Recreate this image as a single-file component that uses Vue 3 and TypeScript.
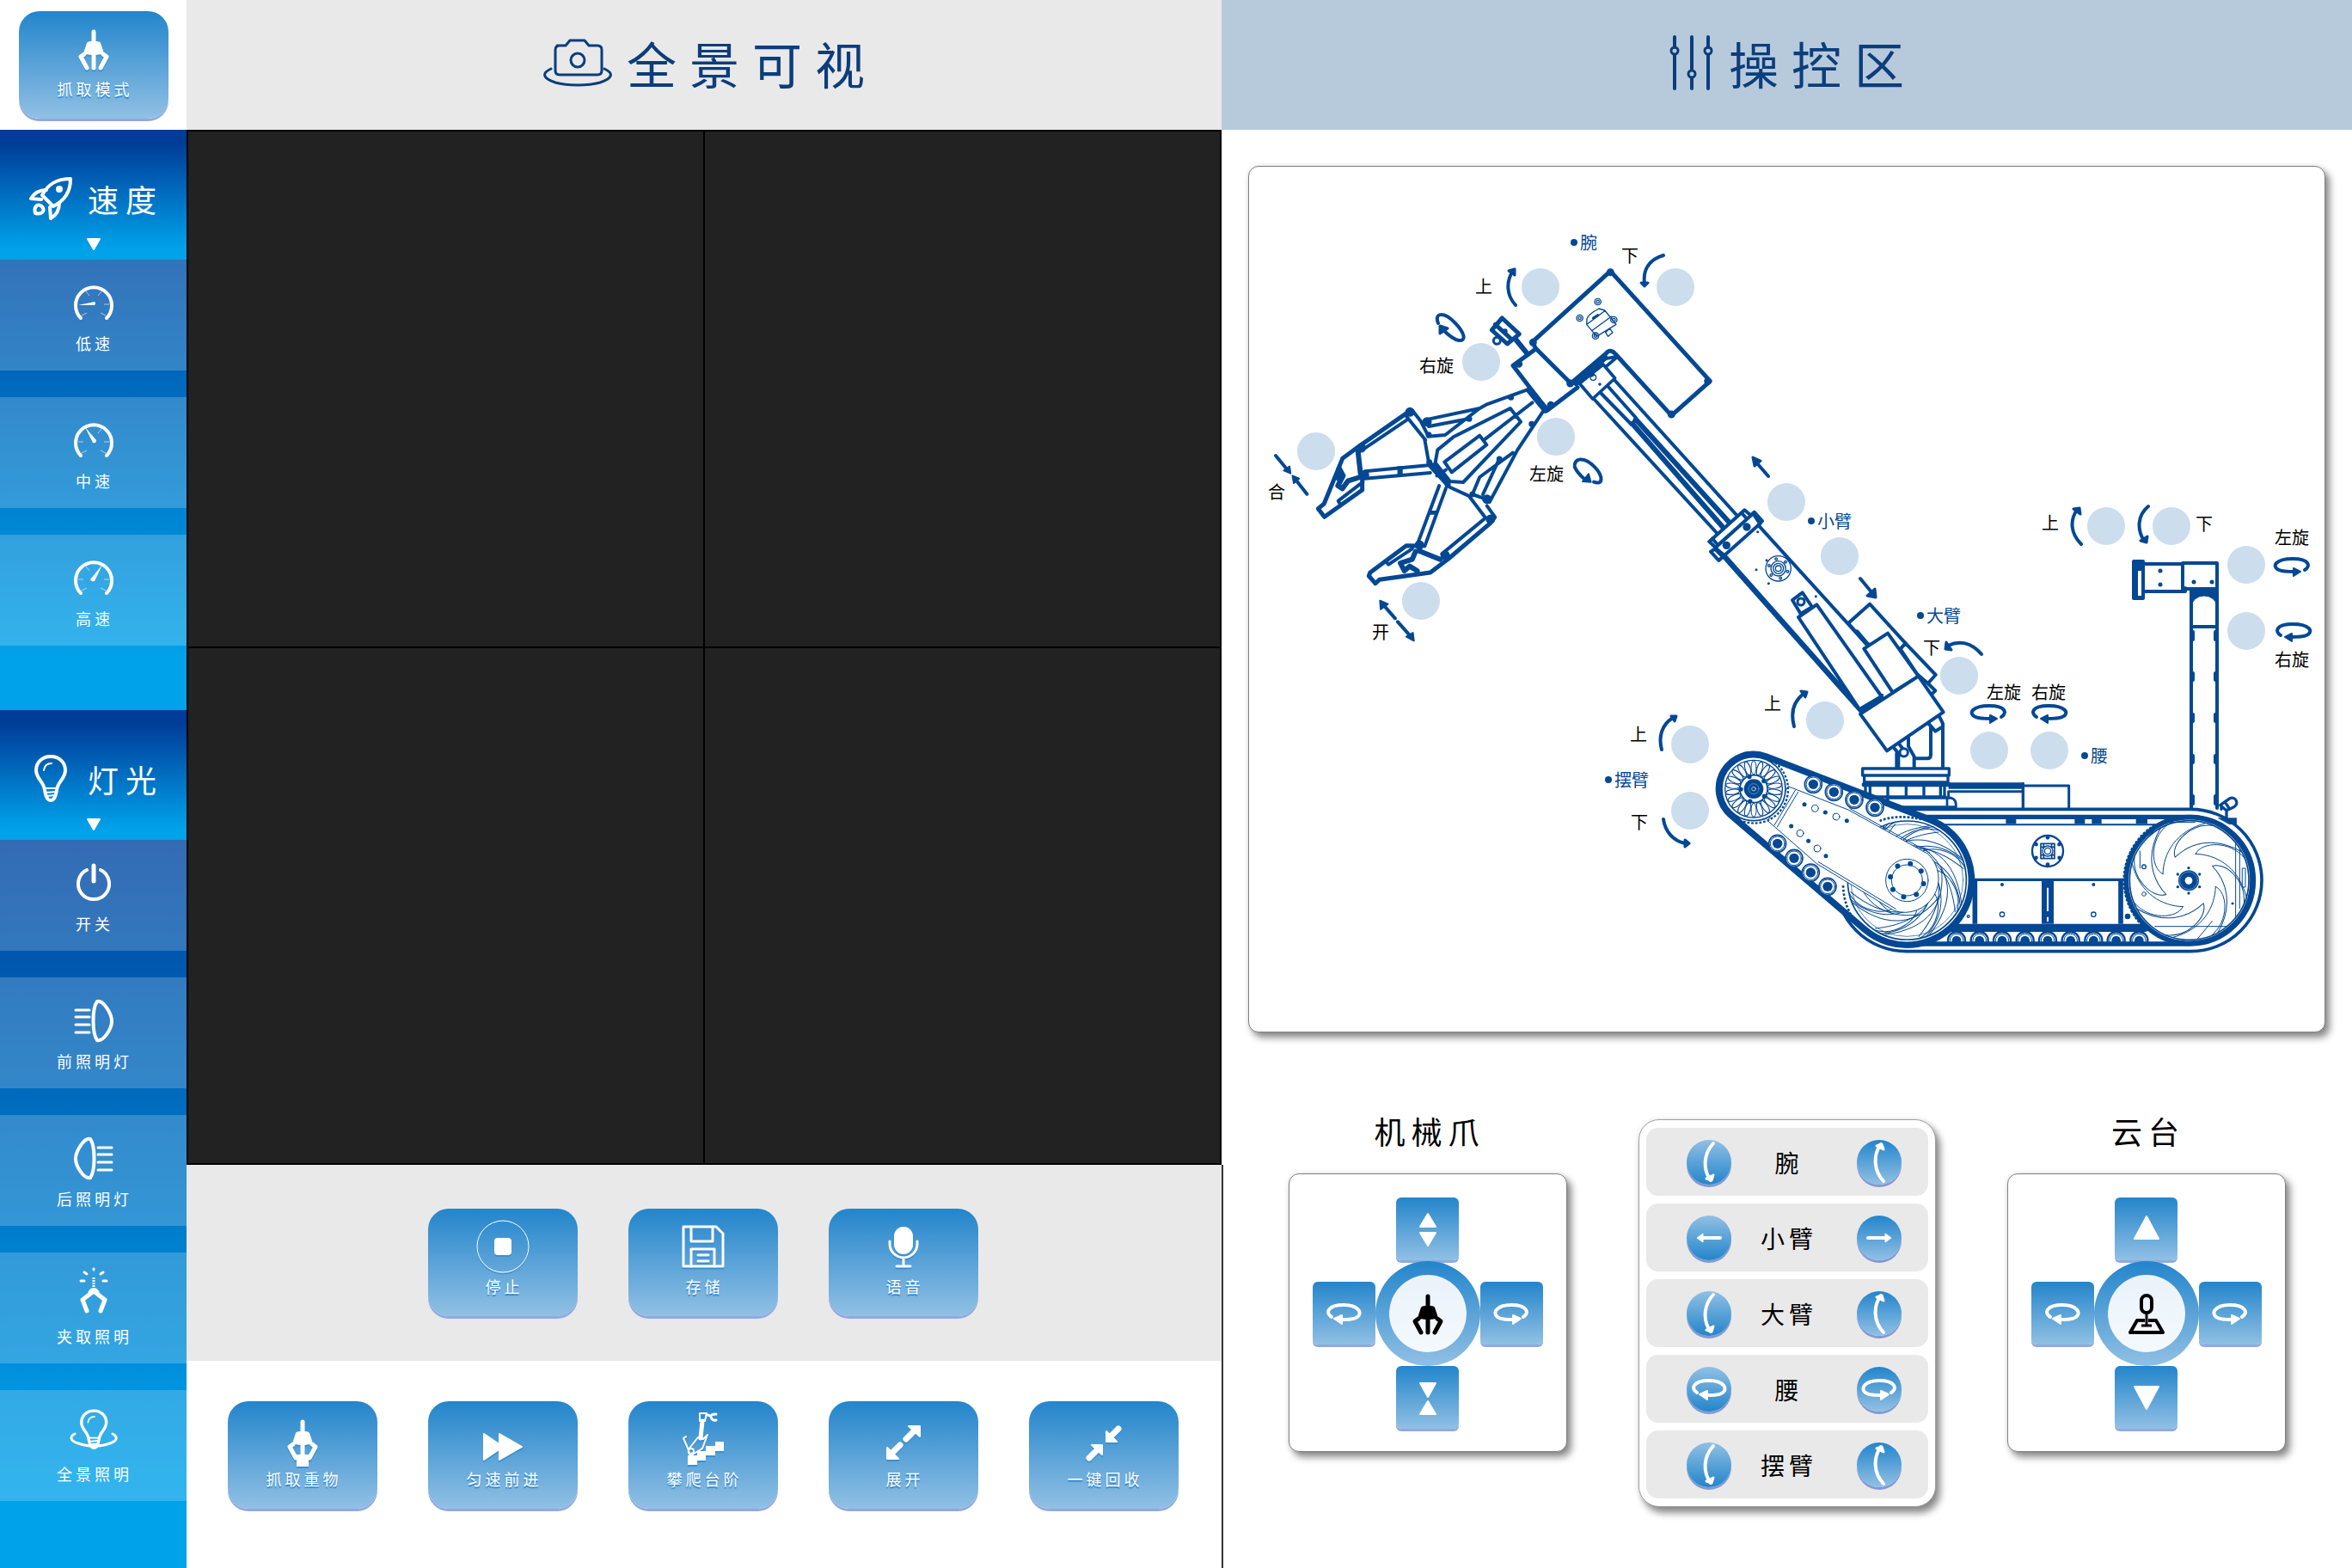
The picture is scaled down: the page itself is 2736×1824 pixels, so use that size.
<script setup lang="ts">
type Shape = { name: string; label: string }

const claw =
  '<path d="M21 38l-4 3 7 13M43 38l4 3-7 13" fill="none" stroke="currentColor" stroke-width="5" stroke-linecap="round" stroke-linejoin="round"/><path d="M32 12V26M32 38V54" stroke="currentColor" stroke-width="5" stroke-linecap="round"/><path d="M24 25q1-2 5-2h6q4 0 5 2l3 9q1 3-2 4-9 2-18 0-3-1-2-4z" fill="currentColor"/>'
const bulb =
  '<g fill="none" stroke="currentColor" stroke-linecap="round" stroke-linejoin="round"><path d="M32 6c-10 0-17 7-17 16 0 10 9 13 10 23 1 7 3 12 7 12s6-5 7-12c1-10 10-13 10-23 0-9-7-16-17-16z" stroke-width="4"/><path d="M24 22q1-8 9-8" stroke-width="2"/><path d="M25 43h14M26 48l12-1M27 52l10-1" stroke-width="2"/></g>'
const gauge = (needle: string, ticks: string) =>
  `<path d="M17 50a21 21 0 1 1 30 0" fill="none" stroke="currentColor" stroke-width="4" stroke-linecap="round"/><path d="${ticks}" stroke="currentColor" stroke-width="1" opacity=".6"/><path d="${needle}" fill="currentColor"/>`
const lamp =
  '<path d="M36 10c-6 8-6 37 0 45 7 2 17-13 17-22S43 8 36 10z" fill="none" stroke="currentColor" stroke-width="4"/><path d="M11 20h16M11 28h16M11 37h16M11 46h16" stroke="currentColor" stroke-width="3" stroke-linecap="round"/>'
const loop =
  '<path d="M46 36c8-5 4-14-14-14s-22 10-16 14c4 3 10 3 18 3" fill="none" stroke="currentColor" stroke-width="4" stroke-linecap="round"/><path d="M34 34v10l9-6z" fill="currentColor" stroke="currentColor" stroke-width="2" stroke-linejoin="round"/>'
const arcDown =
  '<g fill="none" stroke="currentColor" stroke-linecap="round" stroke-linejoin="round"><path d="M37 10c-12 13-12 31-3 43" stroke-width="4"/><path d="M29 51l6 2 2-6z" fill="currentColor" stroke-width="3"/></g>'
const arrowRight =
  '<path d="M19 32h22" stroke="currentColor" stroke-width="4" stroke-linecap="round"/><path d="M39 27l7 5-7 5z" fill="currentColor" stroke="currentColor" stroke-width="1" stroke-linejoin="round"/>'
const flip = (inner: string, sx: number, sy: number) =>
  `<g transform="translate(${sx < 0 ? 64 : 0} ${sy < 0 ? 64 : 0}) scale(${sx} ${sy})">${inner}</g>`
const tri = (d: string) =>
  `<path d="${d}" fill="currentColor" stroke="currentColor" stroke-width="2" stroke-linejoin="round"/>`

const icons: Record<string, string> = {
  claw,
  weight: claw + '<path d="M25 50h14v14h-14z" fill="currentColor"/>',
  bulb,
  rocket:
    '<g transform="translate(7 7)" fill="none" stroke="currentColor" stroke-width="4" stroke-linejoin="round" stroke-linecap="round"><path d="M48 2c-16 0-26 6-33 19l13 13C41 27 48 18 48 2z"/><circle cx="35" cy="14" r="2"/><path d="M20 15C11 15 6 18 2 25l12 1M35 30c0 9-3 14-10 18l-1-13"/><path d="M9 33c-3 2-3 5-2 9 4 1 7 1 9-2 2-4-3-9-7-7z" stroke-width="4"/></g>',
  low: gauge('M14 35l19-4q2 2 0 4z', 'M23 19l4 5M41 19l-4 5M50 34h-6M18 47l6-3M46 47l-6-3'),
  mid: gauge('M22 17l13 15q0 4-4 3z', 'M41 19l-4 5M50 34h-6M14 34h6M18 47l6-3M46 47l-6-3'),
  high: gauge('M42 17l-9 19q-4 1-5-2z', 'M23 19l4 5M50 34h-6M14 34h6M18 47l6-3M46 47l-6-3'),
  power:
    '<g fill="none" stroke="currentColor" stroke-linecap="round"><path d="M24 17a18 18 0 1 0 16 0" stroke-width="4"/><path d="M32 12v18" stroke-width="5"/></g>',
  front: lamp,
  rear: flip(lamp, -1, 1),
  grip:
    '<g fill="none" stroke="currentColor" stroke-linecap="round" stroke-linejoin="round"><path d="M32 27l-13 10 5 13M32 27l13 10-5 13" stroke-width="5"/><path d="M28 28q4-5 8 0" stroke-width="5"/><path d="M32 11v12" stroke-width="3" stroke-linecap="butt" stroke-dasharray="2 1"/><path d="M17 15h4M43 15h4M21 5l3 2M43 5l-3 2M32 1v1" stroke-width="3"/></g>',
  pano:
    '<g transform="translate(5 1) scale(.85)">' + bulb +
    '</g><path d="M10 33c-6 3-6 8 4 11 10 4 27 4 37 0 9-3 9-8 3-11" fill="none" stroke="currentColor" stroke-width="3" stroke-linecap="round"/>',
  stop:
    '<circle cx="32" cy="32" r="30" fill="none" stroke="currentColor" stroke-width="1"/><rect x="22" y="22" width="20" height="20" rx="4" fill="currentColor"/>',
  save:
    '<g fill="none" stroke="currentColor" stroke-width="3" stroke-linejoin="round" stroke-linecap="round"><path d="M9 9h38l8 8v38H9z"/><path d="M18 9v17h25V9M18 55V35h27v20"/><path d="M26 42h12M26 49h12"/></g>',
  mic:
    '<rect x="21" y="9" width="22" height="32" rx="11" fill="currentColor"/><path d="M16 26v3a16 16 0 0 0 32 0v-3M32 45v9M24 55h16" fill="none" stroke="currentColor" stroke-width="3" stroke-linecap="round"/>',
  forward: tri('M10 26l22 15-22 15zM28 26l26 15-26 15z'),
  stairs:
    '<path d="M14 62V51h11v-5h10v-6h11v-5h10v11H46v5H35v6H25v5z" fill="currentColor"/><g fill="none" stroke="currentColor" stroke-width="3" stroke-linejoin="round" stroke-linecap="round"><path d="M28 2h8l-2 9h-6z" stroke-width="2"/><path d="M31 11l-2 20" stroke-width="5"/><path d="M37 4l4 1M47 3q-7 0-6 3 1 5 6 4"/><path d="M26 30l6 2 5-5-6 16-13 8q-4-2-3-7zM15 45l-6-14 3-2" stroke-width="2"/><circle cx="18" cy="46" r="3" stroke-width="2"/></g>',
  expand:
    '<path d="M35 32l11-11M28 39L17 50" stroke="currentColor" stroke-width="7" stroke-linecap="round"/>' + tri('M38 17h13v12zM13 42v13h13z'),
  collapse:
    '<path d="M49 20L39 30M15 54l10-10" stroke="currentColor" stroke-width="7" stroke-linecap="round"/>' + tri('M35 23v12h12zM30 50V39H18z'),
  loopRight: loop,
  loopLeft: flip(loop, -1, 1),
  arcDown,
  arcUp: flip(arcDown, 1, -1),
  arrowRight,
  arrowLeft: flip(arrowRight, -1, 1),
  open: tri('M32 14l9 15h-18zM32 51l9-15h-18z'),
  close: tri('M32 31l9-16h-18zM32 36l9 15h-18z'),
  up: tri('M32 17l14 26h-28z'),
  down: tri('M32 45l14-26h-28z'),
  stick:
    '<g fill="none" stroke="currentColor" stroke-width="4" stroke-linejoin="round"><rect x="26" y="11" width="12" height="20" rx="6"/><path d="M32 31v15M26 46h12" stroke-width="3"/><path d="M30 40h-9l-8 14h38l-8-14h-9"/></g>',
}

const groups = [
  { name: '速度', icon: 'rocket', cls: 'speed', items: [
    { name: 'low', label: '低速' }, { name: 'mid', label: '中速' }, { name: 'high', label: '高速' }] },
  { name: '灯光', icon: 'bulb', cls: 'light', items: [
    { name: 'power', label: '开关' }, { name: 'front', label: '前照明灯' }, { name: 'rear', label: '后照明灯' },
    { name: 'grip', label: '夹取照明' }, { name: 'pano', label: '全景照明' }] },
]

const recordButtons: Shape[] = [
  { name: 'stop', label: '停止' }, { name: 'save', label: '存储' }, { name: 'mic', label: '语音' },
]
const actionButtons: Shape[] = [
  { name: 'weight', label: '抓取重物' }, { name: 'forward', label: '匀速前进' }, { name: 'stairs', label: '攀爬台阶' },
  { name: 'expand', label: '展开' }, { name: 'collapse', label: '一键回收' },
]

const pads = [
  { title: '机械爪', centre: 'claw', up: 'open', down: 'close' },
  { title: '云台', centre: 'stick', up: 'up', down: 'down' },
]
const joints = [
  { label: '腕', left: 'arcDown', right: 'arcUp' },
  { label: '小臂', left: 'arrowLeft', right: 'arrowRight' },
  { label: '大臂', left: 'arcDown', right: 'arcUp' },
  { label: '腰', left: 'loopLeft', right: 'loopRight' },
  { label: '摆臂', left: 'arcDown', right: 'arcUp' },
]

// Diagram coordinates share the drawing's view box.
const view = { x: 1453, y: 194, w: 1251, h: 1006 }
const place = (x: number, y: number) => ({
  left: `${((x - view.x) / view.w) * 100}%`,
  top: `${((y - view.y) / view.h) * 100}%`,
})
const knobs: [number, number, string][] = [
  [1792, 334, '腕上'], [1949, 334, '腕下'], [1723, 421, '腕右旋'], [1810, 508, '腕左旋'], [1531, 525, '合'], [1653, 699, '开'],
  [2078, 584, '小臂伸'], [2140, 647, '小臂缩'], [2279, 786, '大臂下'], [2123, 838, '大臂上'], [2314, 873, '腰左旋'], [2384, 873, '腰右旋'],
  [1966, 866, '摆臂上'], [1966, 943, '摆臂下'], [2450, 612, '云台上'], [2526, 612, '云台下'], [2613, 657, '云台左旋'], [2613, 734, '云台右旋'],
]
const tags: [number, number, string][] = [
  [1726, 333, '上'], [1896, 297, '下'], [1671, 425, '右旋'], [1799, 551, '左旋'], [1485, 572, '合'], [1606, 735, '开'],
  [2247, 753, '下'], [2062, 818, '上'], [2331, 805, '左旋'], [2383, 805, '右旋'], [2385, 608, '上'], [2564, 609, '下'],
  [2666, 625, '左旋'], [2666, 767, '右旋'], [1906, 854, '上'], [1907, 956, '下'],
]
const parts: [number, number, string][] = [
  [1848, 282, '腕'], [2134, 606, '小臂'], [2261, 716, '大臂'], [2442, 879, '腰'], [1898, 907, '摆臂'],
]

const polar = (cx: number, cy: number, r: number, n: number, start = 0) =>
  Array.from({ length: n }, (_, i) => {
    const a = start + (i * 2 * Math.PI) / n
    return { x: cx + r * Math.cos(a), y: cy + r * Math.sin(a) }
  })
const blade = 'M-92-22C-135-42-140-142-78-192M-92-22C-90-92-50-172 60-200'
const band = 'M-40-95C60-110 150-60 168 110M-40-120C80-135 170-80 190 78'
const loops = [
  { x: 2314, y: 829, m: 1 }, { x: 2383, y: 829, m: -1 }, { x: 2667, y: 658, m: 1 }, { x: 2667, y: 734, m: -1 },
]
const rollers = [348, 428, 507, 587, 666, 746, 826, 905, 985]
const idlers = [[808, 397], [880, 424], [951, 451], [1023, 478], [683, 604], [741, 655], [799, 705], [858, 754]]
</script>

<template>
  <div class="page">
    <aside class="side">
      <div class="mode">
        <button class="tile" type="button">
          <svg class="icon" viewBox="0 0 64 64" aria-hidden="true" v-html="icons.claw"></svg>
          <span>抓取模式</span>
        </button>
      </div>
      <section v-for="g in groups" :key="g.name" class="group" :class="g.cls">
        <button class="group-head" type="button">
          <span class="group-row">
            <svg class="icon" viewBox="0 0 64 64" aria-hidden="true" v-html="icons[g.icon]"></svg>
            <span>{{ g.name }}</span>
          </span>
          <svg class="caret" viewBox="0 0 18 16" aria-hidden="true"><path d="M2 2h14l-7 12z" fill="#fff" stroke="#fff" stroke-width="2" stroke-linejoin="round" /></svg>
        </button>
        <div class="group-body">
          <button v-for="i in g.items" :key="i.label" class="side-item" type="button">
            <svg class="icon" viewBox="0 0 64 64" aria-hidden="true" v-html="icons[i.name]"></svg>
            <span>{{ i.label }}</span>
          </button>
        </div>
      </section>
    </aside>

    <main class="view">
      <header class="bar bar-view">
        <svg class="bar-icon camera" viewBox="0 0 80 56" aria-hidden="true">
          <g fill="none" stroke="currentColor" stroke-width="3" stroke-linecap="round" stroke-linejoin="round">
            <path d="M16 8h10l5-6h17l5 6h10q5 0 5 5v24q0 5-5 5H19q-5 0-5-5V13q0-5 5-5z" />
            <circle cx="40" cy="25" r="8" />
            <path d="M9 35C-2 40-1 46 14 51c14 4 38 4 52 0 15-5 16-11 5-16" />
          </g>
        </svg>
        <h1>全景可视</h1>
      </header>
      <div class="cameras"><div v-for="n in 4" :key="n" class="camera-cell"></div></div>
      <div class="tiles tiles-record">
        <button v-for="b in recordButtons" :key="b.label" class="tile" type="button">
          <svg class="icon" viewBox="0 0 64 64" aria-hidden="true" v-html="icons[b.name]"></svg>
          <span>{{ b.label }}</span>
        </button>
      </div>
      <div class="tiles tiles-action">
        <button v-for="b in actionButtons" :key="b.label" class="tile" type="button">
          <svg class="icon" viewBox="0 0 64 64" aria-hidden="true" v-html="icons[b.name]"></svg>
          <span>{{ b.label }}</span>
        </button>
      </div>
    </main>

    <section class="control">
      <header class="bar bar-control">
        <svg class="bar-icon sliders" viewBox="0 0 52 64" aria-hidden="true">
          <g fill="none" stroke="currentColor" stroke-width="4" stroke-linecap="round">
            <path d="M6 2v12M6 23v39M26 2v38M26 50v12M45 2v12M45 23v39" />
            <g stroke-width="3"><circle cx="6" cy="18" r="4" /><circle cx="26" cy="45" r="4" /><circle cx="45" cy="18" r="4" /></g>
          </g>
        </svg>
        <h2>操控区</h2>
      </header>

      <div class="control-body">
        <div class="diagram">
          <svg class="robot" viewBox="1453 194 1251 1006" aria-hidden="true">
            <!-- chassis and tracks -->
            <svg x="2160" y="900" width="520" height="220" viewBox="0 0 1560 660" overflow="visible">
              <g fill="none" stroke="#044893" stroke-linejoin="round" stroke-linecap="round">
                <g class="base">
                  <path d="M320 62V120M320 62H580M740 120V42H582" stroke-width="9" />
                  <path d="M320 42H578" stroke-width="22" stroke-linecap="butt" />
                  <path d="M580 34V120" stroke-width="10" />
                </g>
                <path d="M173 124H1165A247 247 0 0 1 1165 620H173A248 248 0 0 1 173 124Z" stroke-width="11" fill="#fff" />
                <path d="M173 151H1163A221 221 0 0 1 1163 594H173" stroke-width="16" />
                <path d="M200 178H1060" stroke-width="6" />
                <path d="M520 167h36M760 167h36M820 167h34M974 167h40" stroke-width="16" stroke-linecap="butt" />
                <circle cx="666" cy="270" r="54" stroke-width="7" />
                <path d="M642 244h48v52h-48zM642 256h48M642 284h48M652 244v52M680 244v52" stroke-width="5" />
                <circle cx="666" cy="270" r="18" stroke-width="4" fill="#fff" />
                <circle cx="666" cy="270" r="11" stroke-width="4" />
                <circle v-for="(p, i) in polar(666, 270, 47, 6, Math.PI / 6)" :key="'b' + i" :cx="p.x" :cy="p.y" r="7" fill="#044893" stroke="none" />
                <path d="M400 370H930" stroke-width="10" />
                <path d="M412 370V524M921 370V524" stroke-width="17" stroke-linecap="butt" />
                <path d="M666 370V524" stroke-width="42" stroke-linecap="butt" />
                <path d="M666 398V480M666 500V516" stroke="#fff" stroke-width="6" stroke-linecap="butt" />
                <path d="M330 538H1010" stroke-width="28" stroke-linecap="butt" />
                <g stroke-width="4"><circle cx="507" cy="387" r="4" fill="#044893" /><circle cx="826" cy="387" r="4" fill="#044893" /><circle cx="507" cy="491" r="8" /><circle cx="826" cy="491" r="8" /><circle cx="389" cy="498" r="4" /><circle cx="945" cy="498" r="8" fill="#044893" /></g>
                <g v-for="x in rollers" :key="x">
                  <path :d="`M${x - 30} 592V582a30 30 0 0 1 60 0V592`" stroke-width="7" />
                  <path :d="`M${x - 23} 590V582a23 23 0 0 1 46 0V590`" stroke-width="3" />
                  <path :d="`M${x - 16} 592V582a16 16 0 0 1 32 0V592z`" fill="#044893" stroke="none" />
                </g>
                <!-- drive wheel -->
                <circle cx="1160" cy="372" r="220" stroke-width="17" fill="#fff" />
                <path d="M1040 180A226 226 0 0 0 1020 550" stroke-width="10" stroke-dasharray="9 5" stroke-linecap="butt" />
                <circle cx="1160" cy="372" r="208" stroke-width="5" />
                <g stroke-width="3">
                  <path v-for="n in 8" :key="n" :d="blade" :transform="`translate(1160 372) rotate(${n * 45})`" />
                  <path d="M1322 240V500M1336 265V470M1346 330h10v66h-10zM1040 533H1290M988 270V330M1020 215l20-18M1190 575l50-60M1090 170h90" />
                </g>
                <circle cx="1002" cy="325" r="7" stroke-width="4" /><circle cx="1002" cy="420" r="7" stroke-width="3" /><circle cx="1311" cy="453" r="4" fill="#044893" />
                <circle cx="1158" cy="373" r="36" fill="#044893" stroke="none" />
                <circle cx="1158" cy="373" r="31" stroke="#fff" stroke-width="1" />
                <circle cx="1158" cy="373" r="13" fill="#fff" stroke="none" />
                <circle v-for="(p, i) in polar(1158, 373, 44, 6, Math.PI / 6)" :key="'h' + i" :cx="p.x" :cy="p.y" r="5" fill="#044893" stroke="none" />
                <!-- tow hook -->
                <path d="M1268 110L1302 86A16 16 0 0 1 1316 116L1290 128ZM1284 98l16 24M1290 128V156M1272 106V124" stroke-width="10" />
                <path d="M1262 155H1325V176H1300z" fill="#044893" stroke-width="2" />
              </g>
            </svg>

            <!-- mast and camera head -->
            <g fill="none" stroke="#044893" stroke-width="4" stroke-linejoin="round" stroke-linecap="round">
              <path d="M2549 686V940M2579 686V940M2549 729H2579" />
              <path d="M2549 686H2579V706A15 13 0 0 0 2549 706Z" fill="#044893" stroke-width="1" />
              <path d="M2539 655H2579V685H2539ZM2494 656H2539M2494 688H2542V684" />
              <path d="M2482 653H2493V696H2482Z" fill="#044893" /><path d="M2489 664V693" stroke="#fff" stroke-linecap="butt" />
              <path d="M2551 735v9M2577 735v9M2551 783v8M2577 783v8M2551 831v8M2577 831v8M2551 879v8M2577 879v8M2551 926v9M2577 926v9" />
              <path d="M2513 664h0M2513 680h0M2552 677h0M2573 677h0" stroke-width="5" />
            </g>

            <!-- upper and lower arm -->
            <g fill="none" stroke="#044893" stroke-width="4" stroke-linejoin="round" stroke-linecap="round">
              <path d="M1878 442L2020 599M1854 464L1998 621M1871 450L1903 486M1862 457L1898 494L1903 487" />
              <path d="M1903 488L2011 607M1899 493L2004 613" stroke-width="6" />
            </g>
            <svg x="1960" y="480" width="400" height="440" viewBox="0 0 1200 1320" overflow="visible">
              <g fill="none" stroke="#044893" stroke-width="12" stroke-linejoin="round" stroke-linecap="round">
                <path d="M900 1240V1085L885 1055M858 1100V1195Q858 1207 846 1207H805M780 1135V1165L800 1200V1240M850 1085L874 1112L893 1100" />
                <path d="M742 1190V1236" stroke-width="18" />
                <circle cx="764" cy="1186" r="14" fill="#fff" stroke-width="9" />
                <path d="M725 1165l25 30M742 1150l16 20" />
                <path d="M258 395L640 815L700 900L612 1040L135 500Z" fill="#fff" stroke="none" />
                <path d="M258 395L640 815" />
                <path d="M138 502L612 1036" stroke-width="19" />
                <path d="M540 930L612 1040" />
                <path d="M85 450L208 340L232 360L106 470Z" fill="#fff" />
                <path d="M106 472L238 352L262 388L138 498Z" fill="#fff" />
                <path d="M228 360L242 347L270 378L256 393M90 485L104 476L132 503L118 516ZM96 440l14 16M198 350l14 16" />
                <circle cx="216" cy="399" r="14" fill="#044893" stroke="none" /><circle cx="145" cy="463" r="14" fill="#044893" stroke="none" />
                <g stroke-width="4"><circle cx="326" cy="544" r="44" /><circle cx="326" cy="544" r="26" /><circle cx="326" cy="544" r="18" /><circle cx="326" cy="544" r="10" />
                  <circle v-for="(p, i) in polar(326, 544, 34, 6, 0.3)" :key="'e' + i" :cx="p.x" :cy="p.y" r="4" /></g>
                <path d="M285 515h0M249 548h0M292 596h0M457 641h0M254 416h0" stroke-width="9" />
                <path d="M645 668L570 735L635 808L752 825L770 805Z" fill="#fff" />
                <path d="M600 765L640 812" stroke-width="16" />
                <path d="M770 805L875 915L848 945L810 912L752 825ZM848 945L874 970L860 984" fill="#fff" />
                <path d="M708 770L625 824L725 976L815 920Z" fill="#fff" />
                <path d="M410 628L375 654L404 702L444 678Z" fill="#fff" />
                <circle cx="405" cy="660" r="12" stroke-width="9" />
                <path d="M460 670L396 714L612 1040L688 993Z" fill="#fff" />
                <path d="M614 1030L690 985" stroke-width="8" />
                <path d="M612 1052L815 920L902 1045L705 1180Z" fill="#fff" />
              </g>
            </svg>

            <!-- wrist housing -->
            <svg x="1600" y="280" width="420" height="240" viewBox="0 0 1260 720" overflow="visible">
              <g fill="none" stroke="#044893" stroke-width="15" stroke-linejoin="round" stroke-linecap="round">
                <path d="M490 345L528 392" stroke-width="18" />
                <path d="M442 270L502 326L460 360L406 312ZM418 292L476 345" fill="#fff" /><path d="M452 316h0" stroke-width="18" />
                <circle cx="424" cy="349" r="12" stroke-width="9" />
                <path d="M556 380L480 436L600 592L705 512" fill="#fff" />
                <path d="M538 522L594 590" stroke-width="24" />
                <path d="M820 106L1168 490L1033 610L838 396Q820 374 804 394L682 498L558 374L548 353Z" />
                <path d="M700 496L800 408" stroke-width="22" />
                <path d="M820 110h0M1160 490h0M1033 606h0M680 498h0M550 355h0M500 430h0M612 574h0" stroke-width="27" />
                <path d="M800 412L846 404L806 438" stroke-width="11" />
                <path d="M795 432L836 480L758 552L712 498Z" fill="#fff" stroke-width="11" />
                <circle cx="760" cy="477" r="10" stroke-width="4" /><path d="M783 501h0" stroke-width="11" /><path d="M754 472l8-4" stroke-width="8" />
                <g stroke-width="4">
                  <g v-for="p in [[776, 213], [713, 270], [832, 276], [768, 332]]" :key="p[0]"><circle :cx="p[0]" :cy="p[1]" r="11" /><circle :cx="p[0]" :cy="p[1]" r="5" /></g>
                  <path d="M738 272Q745 255 780 237L800 243L840 292L772 334L737 292ZM740 290L802 244M755 314L824 264M803 320L817 306L828 320L812 334Z" /><path d="M760 270l16-10" stroke-width="9" />
                </g>
              </g>
            </svg>

            <!-- gripper -->
            <svg x="1440" y="240" width="600" height="520" viewBox="0 0 1568 1560" preserveAspectRatio="none" overflow="visible">
              <g class="steady" fill="none" stroke="#044893" stroke-width="4" stroke-linejoin="round" stroke-linecap="round">
                <path d="M525 712L375 832L318 880L262 1038L244 1055L263 1084L378 990V955" stroke-width="5" />
                <path d="M518 742L385 845M510 730L570 815M530 712L556 750L578 800M570 745L735 705L755 692L880 640M580 768L700 742M735 705L630 798L578 803" />
                <path d="M365 855L373 935M372 945L335 958L318 985L304 975L320 940L308 915" stroke-width="6" />
                <path d="M385 925L585 903M385 950L585 930M380 962L305 1028L312 1042L340 1020M568 815L582 905L640 978L705 1012" />
                <path d="M895 685L752 812M828 705L655 805L607 850L600 895L645 960L685 963L860 752ZM735 800L628 892L650 928L756 832ZM590 900L615 930L640 970M605 940L632 920" />
                <path d="M928 715L850 850L765 1032M836 860L735 945L713 1005L745 1018M795 880L745 1005" />
                <path d="M612 975L548 1172M632 985L568 1186M705 1015L752 1086M757 1045L782 1085L768 1105M750 1090L620 1213" />
                <path d="M768 1105L640 1230L585 1278L430 1303L418 1316L398 1290L402 1278L512 1184L545 1185" stroke-width="5" />
                <path d="M550 1202L615 1232M540 1205L530 1232L494 1245L506 1272L522 1256L545 1272" stroke-width="6" />
                <path d="M530 1195L458 1250L450 1240" />
                <path d="M523 718h0M375 843h0M385 938h0M575 752h0M630 1218h0M768 1092h0M552 1182h0M757 1022h0M310 945h0" stroke-width="11" />
                <path d="M485 922h16M592 1062v14" stroke-width="10" stroke-linecap="butt" />
                <path d="M703 742h0M830 667h0M893 760h0M795 882h0M638 972h0M582 893h0M580 797h0M713 1005h0" stroke-width="7" />
                <!-- motion arrows around the gripper -->
                <path d="M1082 962C1112 975 1110 940 1085 910C1050 870 1020 880 1024 910Q1032 930 1052 950" />
                <path d="M115 870L152 922M210 1004L174 952M478 1438L440 1388M486 1450L526 1502" />
                <path d="M1073 962L1048 960L1066 934ZM160 932L140 922L157 908ZM166 940L170 966L186 950ZM432 1376L434 1406L456 1388ZM535 1516L512 1502L532 1488Z" fill="#044893" stroke-width="2" />
              </g>
            </svg>

            <!-- turret and flipper -->
            <svg x="1840" y="780" width="500" height="350" viewBox="0 0 1500 1050" overflow="visible">
              <g fill="none" stroke="#044893" stroke-linejoin="round" stroke-linecap="round">
                <path d="M1065 445H1290Q1308 450 1306 476H1065Z" fill="#fff" stroke-width="9" /><path d="M1275 445V478" stroke-width="8" />
                <path d="M980 342H1282V366H980ZM986 366H1278V390H986Z" fill="#fff" stroke-width="10" />
                <path d="M985 398H1282" stroke-width="16" />
                <path d="M990 400V440M1006 400V440M1068 400V490M1132 400V440M1194 400V440M1252 400V440M1266 400V440M990 441H1270" stroke-width="10" />
                <path d="M643 300L1216 521A226 226 0 1 1 988 904L521 505A121 121 0 0 1 643 300Z" fill="#fff" stroke-width="23" />
                <!-- rear wheel seen behind the flipper -->
                <circle cx="1135" cy="732" r="207" stroke-width="5" />
                <circle cx="1135" cy="732" r="196" stroke-width="2" />
                <g stroke-width="3">
                  <path v-for="n in 8" :key="'r' + n" :d="band" :transform="`translate(1135 732) rotate(${n * 45})`" />
                  <path v-for="n in 8" :key="'q' + n" :d="blade" :transform="`translate(1135 732) rotate(${n * 45 + 10})`" />
                </g>
                <path d="M1040 525Q1100 500 1190 520M912 750Q915 830 960 880" stroke-width="8" stroke-dasharray="8 6" stroke-linecap="butt" />
                <!-- flipper side plate -->
                <path d="M722 405L930 486L1208 640A118 118 0 0 1 1090 838L820 674L650 525Z" fill="#fff" stroke-width="3" />
                <path d="M936 482L1214 636M826 668L1096 832M745 418L672 540M755 424L682 546" stroke-width="3" />
                <g v-for="p in idlers" :key="p[0]">
                  <circle :cx="p[0]" :cy="p[1]" r="30" fill="#fff" stroke-width="5" /><circle :cx="p[0]" :cy="p[1]" r="25" stroke-width="3" /><circle :cx="p[0]" :cy="p[1]" r="17" fill="#044893" stroke="none" />
                </g>
                <g stroke-width="3">
                  <circle cx="1135" cy="732" r="74" /><circle cx="1135" cy="732" r="54" />
                  <circle cx="814" cy="481" r="12" /><circle cx="888" cy="510" r="12" /><circle cx="762" cy="568" r="12" /><circle cx="822" cy="621" r="12" />
                </g>
                <circle v-for="(p, i) in polar(1135, 732, 59, 8, 0.2)" :key="'f' + i" :cx="p.x" :cy="p.y" r="9" fill="#044893" stroke="none" />
                <path d="M777 467h0M850 495h0M925 524h0M731 543h0M791 595h0M852 647h0" stroke-width="15" />
                <!-- flipper wheel -->
                <circle cx="600" cy="413" r="111" fill="#fff" stroke-width="5" />
                <path d="M675 322A118 118 0 0 1 560 525" stroke-width="7" stroke-dasharray="8 6" stroke-linecap="butt" />
                <circle cx="600" cy="413" r="100" stroke-width="4" />
                <ellipse v-for="n in 22" :key="'p' + n" cx="0" cy="-74" rx="9" ry="24" stroke-width="3" :transform="`translate(600 413) rotate(${n * 360 / 22})`" />
                <circle cx="600" cy="413" r="48" fill="#fff" stroke-width="5" />
                <circle cx="600" cy="413" r="34" fill="#044893" stroke="none" />
                <circle cx="600" cy="413" r="18" stroke="#fff" stroke-width="1" /><circle cx="600" cy="413" r="7" stroke="#fff" stroke-width="2" />
                <circle v-for="(p, i) in polar(600, 413, 45, 5, 0.6)" :key="'s' + i" :cx="p.x" :cy="p.y" r="8" fill="#044893" stroke="none" />
              </g>
            </svg>

            <!-- motion arrows -->
            <g fill="none" stroke="#044893" stroke-width="4" stroke-linejoin="round" stroke-linecap="round">
              <path d="M1763 355C1752 343 1752 327 1760 315M1935 297C1918 302 1911 314 1913 330M1673 376C1668 363 1680 363 1692 375C1704 387 1706 397 1697 396C1690 395 1683 388 1678 383" />
              <path d="M2057 554L2044 539M2164 673L2178 690M2305 761C2293 747 2279 745 2266 751M2087 845C2083 830 2085 817 2098 807M1933 872C1929 857 1933 843 1946 835M1935 953C1937 967 1946 978 1960 981M2421 633C2408 620 2408 605 2416 593M2499 589C2486 600 2486 616 2494 629" />
              <path d="M1755 315L1762 313V320ZM1909 329L1913 333L1917 329ZM1675 379L1684 382L1675 388ZM2039 532L2041 542L2048 536ZM2182 695L2172 693L2181 685ZM2264 747L2263 755L2270 756ZM2095 804L2102 805L2100 811ZM1944 833L1950 833L1948 839ZM1960 977L1965 981L1960 985ZM2412 592L2419 591L2420 598ZM2490 629L2497 631L2498 624Z" fill="#044893" stroke-width="3" />
              <g v-for="l in loops" :key="l.x + '-' + l.y" :transform="`translate(${l.x} ${l.y}) scale(${l.m} 1)`">
                <path d="M14 5C21 1 20-8 0-8C-20-8-25 1-16 5Q-12 7 2 7" />
                <path d="M1 3V12L9 7Z" fill="#044893" stroke-width="2" />
              </g>
            </g>
          </svg>

          <button v-for="k in knobs" :key="k[2]" class="knob" type="button" :aria-label="k[2]" :style="place(k[0], k[1])"></button>
          <span v-for="(t, i) in tags" :key="i" class="tag" :style="place(t[0], t[1])">{{ t[2] }}</span>
          <span v-for="p in parts" :key="p[2]" class="tag part" :style="place(p[0], p[1])">{{ p[2] }}</span>
        </div>

        <div class="panels">
          <section v-for="(p, i) in pads" :key="p.title" class="pad-col" :class="{ last: i === 1 }">
            <h3>{{ p.title }}</h3>
            <div class="pad">
              <button class="key key-up" type="button" :aria-label="p.title + '上'"><svg class="icon" viewBox="0 0 64 64" v-html="icons[p.up]"></svg></button>
              <button class="key key-left" type="button" :aria-label="p.title + '左旋'"><svg class="icon" viewBox="0 0 64 64" v-html="icons.loopLeft"></svg></button>
              <div class="ring"><div class="ring-core"><svg class="icon" viewBox="0 0 64 64" aria-hidden="true" v-html="icons[p.centre]"></svg></div></div>
              <button class="key key-right" type="button" :aria-label="p.title + '右旋'"><svg class="icon" viewBox="0 0 64 64" v-html="icons.loopRight"></svg></button>
              <button class="key key-down" type="button" :aria-label="p.title + '下'"><svg class="icon" viewBox="0 0 64 64" v-html="icons[p.down]"></svg></button>
            </div>
          </section>
          <div class="joints">
            <div v-for="j in joints" :key="j.label" class="joint">
              <button class="round round-left" type="button" :aria-label="j.label + '左'"><svg class="icon" viewBox="0 0 64 64" v-html="icons[j.left]"></svg></button>
              <span>{{ j.label }}</span>
              <button class="round round-right" type="button" :aria-label="j.label + '右'"><svg class="icon" viewBox="0 0 64 64" v-html="icons[j.right]"></svg></button>
            </div>
          </div>
        </div>
      </div>
    </section>
  </div>
</template>

<style>
body { margin: 0; background: #fff; }
</style>

<style scoped>
.page {
  display: grid;
  grid-template-columns: 217px minmax(0, 1204fr) minmax(0, 1315fr);
  min-height: 100vh;
  font-family: "Noto Sans CJK SC", "Noto Sans", sans-serif;
  color: #000;
}
button { font: inherit; border: 0; padding: 0; margin: 0; cursor: pointer; color: #fff; background: none; }
h1, h2, h3 { margin: 0; font-weight: 400; }
.icon { display: block; width: 64px; height: 64px; flex: none; overflow: visible; }

.side { display: flex; flex-direction: column; }
.mode { height: 151px; display: flex; justify-content: center; padding-top: 13px; box-sizing: border-box; }
.tile {
  width: 174px;
  height: 125px;
  border-radius: 24px;
  background: linear-gradient(#2385cb, #91c0e4);
  box-shadow: 0 3px 0 #8fa9e0;
  display: flex;
  flex-direction: column;
  align-items: center;
  padding-top: 12px;
  font-size: 18px;
  line-height: 20px;
  letter-spacing: 4px;
  text-indent: 4px;
  text-shadow: 0 2px 1px #2a83c8;
}
.tile .icon { filter: drop-shadow(0 2px 0 #3a8fd0); }
.tile span { margin-top: 4px; }

.group { background: linear-gradient(#003c98 6%, #00a2ea 91%); }
.speed { height: 675px; }
.light { flex: 1; }
.group-head {
  width: 100%;
  height: 151px;
  display: flex;
  flex-direction: column;
  align-items: center;
  padding-top: 51px;
  box-sizing: border-box;
  background: linear-gradient(#003c98 10%, #00a2ea 92%);
}
.group-row { width: 100%; height: 58px; display: flex; align-items: center; gap: 11px; padding-left: 27px; box-sizing: border-box; font-size: 36px; letter-spacing: 8px; line-height: 58px; }
.caret { width: 18px; height: 16px; margin-top: 16px; display: block; }
.group-body { display: flex; flex-direction: column; gap: 31px; }
.side-item {
  height: 129px;
  background: rgba(255, 255, 255, 0.2);
  display: flex;
  flex-direction: column;
  align-items: center;
  padding-top: 18px;
  box-sizing: border-box;
  font-size: 18px;
  line-height: 20px;
  letter-spacing: 4px;
  text-indent: 3px;
}
.side-item span { margin-top: 5px; }

.bar { height: 151px; display: flex; align-items: center; justify-content: center; gap: 17px; padding-bottom: 6px; box-sizing: border-box; color: #0c3d7c; }
.bar h1, .bar h2 { font-size: 58px; line-height: 60px; letter-spacing: 15px; margin-right: -15px; }
.bar-view { background: #e9e9e9; }
.bar-control { background: #b6cadb; }
.camera { width: 80px; height: 56px; }
.sliders { width: 52px; height: 64px; }

.view { display: flex; flex-direction: column; }
.cameras {
  aspect-ratio: 1204 / 1204;
  display: grid;
  grid-template: 1fr 1fr / 1fr 1fr;
  gap: 2px;
  padding: 2px;
  box-sizing: border-box;
  background: #000;
}
.camera-cell { background: #222; }
.tiles { display: flex; justify-content: center; gap: 59px; padding-right: 3px; border-right: 2px solid #333; margin-right: -2px; }
.tiles-record { background: #e9e9e9; padding-top: 51px; padding-bottom: 52px; }
.tiles-action { flex: 1; padding-top: 47px; }

.control { display: flex; flex-direction: column; }
.control-body { padding: 42px 31px 0; }
.diagram { position: relative; border: 1px solid #808080; border-radius: 12px; background: #fff; box-shadow: 5px 6px 8px rgba(0, 0, 0, 0.45), 0 0 6px rgba(0, 0, 0, 0.1); }
.robot { display: block; width: 100%; height: auto; }
.steady path { vector-effect: non-scaling-stroke; }
.knob { position: absolute; width: 44px; height: 44px; border-radius: 50%; background: #ccdded; transform: translate(-50%, -50%); }
.tag { position: absolute; transform: translate(-50%, -50%); font-size: 20px; line-height: 24px; white-space: nowrap; }
.part { color: #044893; }
.part::before { content: ""; position: absolute; left: -11px; top: 8px; width: 8px; height: 8px; border-radius: 50%; background: #044893; }

.panels { display: flex; justify-content: center; gap: 83px; margin-top: 101px; }
.joints { order: 1; }
.last { order: 2; }
.pad-col h3 { font-size: 36px; line-height: 26px; letter-spacing: 7px; text-indent: 5px; text-align: center; margin-bottom: 37px; }
.pad {
  display: grid;
  grid-template-columns: 73px 122px 73px;
  grid-template-rows: 73px 123px 73px;
  place-items: center;
  padding: 27px 27px 26px;
  border: 1px solid #808080;
  border-radius: 12px;
  background: #fff;
  box-shadow: 5px 6px 8px rgba(0, 0, 0, 0.45), 0 0 6px rgba(0, 0, 0, 0.1);
}
.key {
  width: 73px;
  height: 73px;
  border-radius: 6px;
  background: linear-gradient(#2385cb, #91c0e4);
  box-shadow: 0 3px 0 #8fa9e0;
  display: grid;
  place-items: center;
}
.key-up { grid-area: 1 / 2; }
.key-left { grid-area: 2 / 1; }
.ring { grid-area: 2 / 2; }
.key-right { grid-area: 2 / 3; }
.key-down { grid-area: 3 / 2; }
.ring { width: 122px; height: 122px; border-radius: 50%; background: linear-gradient(#2385cb, #91c0e4); display: grid; place-items: center; }
.ring-core { width: 90px; height: 90px; border-radius: 50%; background: linear-gradient(#eaf2fa, #f4f9fd); display: grid; place-items: center; }

.joints {
  width: 346px;
  align-self: flex-start;
  box-sizing: border-box;
  display: flex;
  flex-direction: column;
  gap: 9px;
  padding: 9px 8px;
  border: 1px solid #a0a0a0;
  border-radius: 24px;
  background: #fff;
  box-shadow: 5px 7px 8px rgba(0, 0, 0, 0.45), 0 0 6px rgba(0, 0, 0, 0.1);
}
.joint {
  height: 79px;
  border-radius: 14px;
  background: #e9e9e9;
  display: grid;
  grid-template-columns: 99px 1fr 99px;
  align-items: center;
  text-align: center;
  font-size: 28px;
  line-height: 32px;
  letter-spacing: 5px;
  text-indent: 5px;
}
.round { width: 52px; height: 52px; border-radius: 50%; box-shadow: 0 3px 0 #8399d2; display: grid; place-content: center; justify-self: end; }
.round .icon { margin: -6px; }
.round-left { background: linear-gradient(#91c0e4, #2385cb); }
.round-right { background: linear-gradient(#2385cb, #91c0e4); margin-right: 31px; }
</style>
